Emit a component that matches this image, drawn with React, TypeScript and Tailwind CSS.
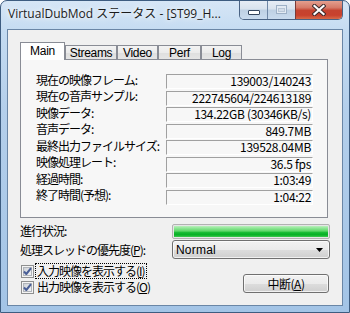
import React from "react";

const labels = [
  "現在の映像フレーム:",
  "現在の音声サンプル:",
  "映像データ:",
  "音声データ:",
  "最終出力ファイルサイズ:",
  "映像処理レート:",
  "経過時間:",
  "終了時間(予想):",
];
const values = [
  "139003/140243",
  "222745604/224613189",
  "134.22GB (30346KB/s)",
  "849.7MB",
  "139528.04MB",
  "36.5 fps",
  "1:03:49",
  "1:04:22",
];

function CheckBox() {
  return (
    <svg width="13" height="13" viewBox="0 0 13 13" className="shrink-0">
      <defs>
        <linearGradient id="cbg" x1="0" y1="0" x2="1" y2="1">
          <stop offset="0" stopColor="#cbcfd5" />
          <stop offset="1" stopColor="#f7f7f7" />
        </linearGradient>
      </defs>
      <rect x="0.5" y="0.5" width="12" height="12" fill="#f4f4f4" stroke="#8e8f8f" />
      <rect x="2.5" y="2.5" width="8" height="8" fill="url(#cbg)" stroke="#b0b4ba" strokeWidth="1" />
      <path d="M3 6.5 L5.3 9 L10 3.2" fill="none" stroke="#4a5f97" strokeWidth="2" strokeLinejoin="round" />
    </svg>
  );
}

export default function App() {
  return (
    <div className="w-[350px] h-[313px] overflow-hidden rounded-t-[7px] border border-[#3d5c80] bg-[linear-gradient(180deg,#d6e6f6_0%,#c4dbf1_10%,#b4cfeb_35%,#a3c4e6_100%)] font-['Noto_Sans_CJK_JP',sans-serif] text-[12px] text-black flex flex-col">
      {/* title bar */}
      <div className="h-[28px] shrink-0 flex items-start pl-[7px]">
        <span className="mt-[5px] text-[12px] leading-[16px] text-[#1b1b1b] font-['Open_Sans','Noto_Sans_CJK_JP',sans-serif] [text-shadow:0_0_8px_#ffffff,0_0_4px_#ffffff] whitespace-nowrap">
          VirtualDubMod ステータス - [ST99_H...
        </span>
        <div className="ml-auto mr-[6px] -mt-[1px] flex h-[20px] rounded-b-[5px] border border-t-0 border-[#4a6384] overflow-hidden">
          <div className="w-[28px] h-full flex items-start justify-center bg-[linear-gradient(180deg,#e8eef6_0%,#d9e3ee_45%,#bfd1e4_55%,#c9dbee_100%)] border-r border-[#6f87a6]">
            <div className="mt-[10px] w-[12px] h-[5px] bg-white border border-[#34465e] rounded-[1px]" />
          </div>
          <div className="w-[28px] h-full flex items-start justify-center bg-[linear-gradient(180deg,#e8eef6_0%,#d9e3ee_45%,#bfd1e4_55%,#c9dbee_100%)] border-r border-[#7a3a36]">
            <div className="mt-[5px] w-[11px] h-[9px] border border-[#9db0c6] bg-[#e2eaf3] flex items-center justify-center">
              <div className="w-[7px] h-[4px] border border-[#b8c6d6] bg-[#d3dde9]" />
            </div>
          </div>
          <div className="w-[46px] h-full flex items-start justify-center bg-[linear-gradient(180deg,#e6a594_0%,#d67a68_40%,#c5432f_55%,#c8412d_80%,#d76a48_100%)]">
            <svg width="14" height="12" viewBox="0 0 14 12" className="mt-[4px]">
              <path d="M2.5 2 L11.5 10 M11.5 2 L2.5 10" stroke="#3b2a2a" strokeWidth="4.2" strokeLinecap="square" />
              <path d="M2.5 2 L11.5 10 M11.5 2 L2.5 10" stroke="#ffffff" strokeWidth="2.2" strokeLinecap="square" />
            </svg>
          </div>
        </div>
      </div>

      {/* client area */}
      <div className="flex-1 mx-[6px] mb-[6px] border border-[#6a86a6] bg-[#f0f0f0] pl-[12px] pt-[12px] flex flex-col">
        {/* tabs */}
        <div className="flex items-end h-[17px] relative z-10 font-['Liberation_Sans',sans-serif] tracking-[-0.3px]">
          <div className="w-[45px] h-[18px] -mb-[1px] bg-white border border-b-0 border-[#898c95] text-center leading-[14px] pt-[1px]">
            Main
          </div>
          {[
            ["Streams", 52],
            ["Video", 41],
            ["Perf", 43],
            ["Log", 41],
          ].map(([t, w]) => (
            <div
              key={t as string}
              style={{ width: w as number }}
              className="h-[14px] bg-[linear-gradient(180deg,#f3f3f3_0%,#ebebeb_50%,#dedede_51%,#e5e5e5_100%)] border border-b-0 border-[#898c95] text-center leading-[14px]"
            >
              {t}
            </div>
          ))}
        </div>
        {/* pane */}
        <div className="w-[308px] h-[159px] border border-[#898c95] bg-[#f7f7f7] pl-[15px] pr-[14px] pt-[14px]">
          <div className="grid grid-cols-[130px_147px] gap-y-[1.5px]">
            {labels.map((l, i) => (
              <React.Fragment key={l}>
                <div className="h-[15px] flex items-center tracking-[-1px] leading-[14px] -mt-[2px] whitespace-nowrap">
                  {l}
                </div>
                <div className="h-[15px] border-t border-l border-t-[#a0a0a0] border-l-[#a0a0a0] border-b border-r border-b-white border-r-white text-right pr-[1px] leading-[12px] tracking-[-0.3px] whitespace-nowrap">
                  {values[i]}
                </div>
              </React.Fragment>
            ))}
          </div>
        </div>

        {/* lower area */}
        <div className="w-[310px] mt-[6px] flex flex-col">
          <div className="grid grid-cols-[152px_158px] items-center">
            <div className="tracking-[-1px] leading-[14px] whitespace-nowrap -mt-[1px]">進行状況:</div>
            <div className="h-[15px] rounded-[2px] border border-[#b2b2b2] p-[1px] bg-[#e6e6e6]">
              <div className="h-full w-full bg-[linear-gradient(180deg,#b9f0bc_0%,#8fe695_20%,#5fd86a_45%,#16bb32_60%,#06b025_80%,#3fca4f_100%)]" />
            </div>
          </div>
          <div className="grid grid-cols-[152px_158px] items-center mt-[1px]">
            <div className="tracking-[-1px] leading-[14px] whitespace-nowrap">
              処理スレッドの優先度(<span className="underline">P</span>):
            </div>
            <div className="h-[19px] rounded-[3px] border border-[#707070] bg-[linear-gradient(180deg,#f2f2f2_0%,#ebebeb_50%,#dddddd_51%,#cfcfcf_100%)] flex items-center pl-[3px] pr-[6px] shadow-[inset_0_0_0_1px_rgba(255,255,255,0.7)]">
              <span className="font-['Liberation_Sans',sans-serif] text-[12px] leading-[14px] tracking-[0.2px]">Normal</span>
              <svg width="7" height="4" viewBox="0 0 7 4" className="ml-auto">
                <path d="M0 0 H7 L3.5 4 Z" fill="#000" />
              </svg>
            </div>
          </div>
          <div className="flex items-start">
            <div className="flex flex-col pt-[4px] pl-[1px] gap-[0px]">
              <div className="h-[16px] flex items-center gap-[1px]">
                <CheckBox />
                <span className="border border-dotted border-black px-[1px] leading-[14px] tracking-[-1px] whitespace-nowrap">
                  入力映像を表示する(<span className="underline">I</span>)
                </span>
              </div>
              <div className="h-[16px] flex items-center gap-[1px]">
                <CheckBox />
                <span className="border border-transparent px-[1px] leading-[14px] tracking-[-1px] whitespace-nowrap">
                  出力映像を表示する(<span className="underline">O</span>)
                </span>
              </div>
            </div>
            <div className="ml-auto mr-[1px] mt-[15px] w-[86px] h-[19px] rounded-[3px] border border-[#707070] bg-[linear-gradient(180deg,#f2f2f2_0%,#ebebeb_50%,#dddddd_51%,#cfcfcf_100%)] shadow-[inset_0_0_0_1px_rgba(255,255,255,0.7)] flex items-center justify-center leading-[14px] tracking-[-0.5px]">
              中断(<span className="underline">A</span>)
            </div>
          </div>
        </div>
      </div>
    </div>
  );
}
